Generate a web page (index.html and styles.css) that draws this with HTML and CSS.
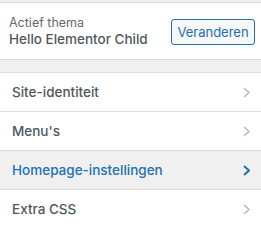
FILE: index.html
```html
<!DOCTYPE html>
<html lang="nl">
<head>
<meta charset="utf-8">
<title>Customizer</title>
<link rel="stylesheet" href="styles.css">
</head>
<body>
<div class="top-gap"></div>
<div class="theme">
  <div class="theme-info">
    <span class="theme-label">Actief thema</span>
    <span class="theme-name">Hello Elementor Child</span>
  </div>
  <button class="change-btn" type="button">Veranderen</button>
</div>
<div class="spacer"></div>
<ul class="sections">
  <li class="section"><span>Site-identiteit</span><svg class="chev" viewBox="0 0 7 11" width="7" height="11"><polyline points="1,1 6,5.5 1,10"/></svg></li>
  <li class="section"><span>Menu's</span><svg class="chev" viewBox="0 0 7 11" width="7" height="11"><polyline points="1,1 6,5.5 1,10"/></svg></li>
  <li class="section active"><span>Homepage-instellingen</span><svg class="chev" viewBox="0 0 7 11" width="7" height="11"><polyline points="1,1 6,5.5 1,10"/></svg></li>
  <li class="section"><span>Extra CSS</span><svg class="chev" viewBox="0 0 7 11" width="7" height="11"><polyline points="1,1 6,5.5 1,10"/></svg></li>
</ul>
</body>
</html>
```
FILE: styles.css
```css
html, body {
  margin: 0;
  padding: 0;
}
body {
  background: #f0f0f1;
  font-family: Inter, "Noto Sans", "Liberation Sans", sans-serif;
  color: #50575e;
}
.top-gap {
  height: 2px;
  border-bottom: 1px solid #dcdcde;
}
.theme {
  height: 56px;
  background: #fff;
  border-bottom: 1px solid #dcdcde;
  display: flex;
  align-items: center;
  justify-content: space-between;
  padding: 0 6px 0 9px;
}
.theme-info {
  display: flex;
  flex-direction: column;
  gap: 1px;
  margin-top: 1px;
}
.theme-label {
  font-size: 12.5px;
  line-height: 14px;
  color: #646970;
}
.theme-name {
  font-size: 13.5px;
  line-height: 16px;
  font-weight: 500;
  color: #50575e;
}
.change-btn {
  width: 84px;
  height: 26px;
  margin-top: 2px;
  border: 1px solid #2271b1;
  border-radius: 3px;
  background: #f6f7f7;
  color: #2271b1;
  font-family: inherit;
  font-size: 13px;
  padding: 0;
}
.spacer {
  height: 12px;
  border-bottom: 1px solid #dcdcde;
}
.sections {
  list-style: none;
  margin: 0;
  padding: 0;
}
.section {
  height: 38px;
  background: #fff;
  border-bottom: 1px solid #dcdcde;
  display: flex;
  align-items: center;
  justify-content: space-between;
  padding: 0 11px 0 12px;
  font-size: 13.5px;
  font-weight: 500;
  color: #50575e;
}
.section.active {
  background: #f0f0f1;
  color: #2271b1;
}
.chev {
  fill: none;
  stroke: #b4b7ba;
  stroke-width: 1.4;
}
.section.active .chev {
  stroke: #2271b1;
  stroke-width: 2;
}
```
